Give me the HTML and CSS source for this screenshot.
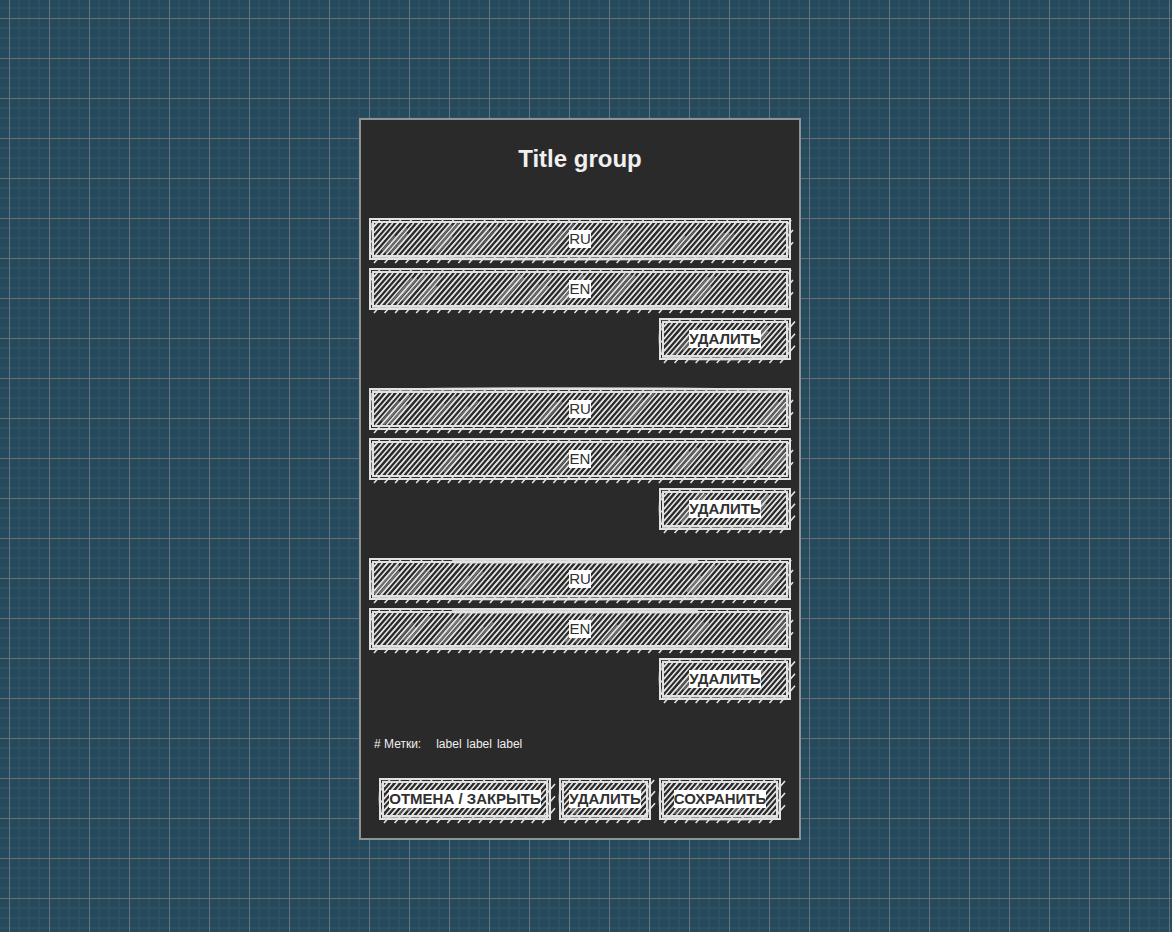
FILE: index.html
```html
<!DOCTYPE html>
<html lang="ru">
<head>
<meta charset="utf-8">
<title>Title group</title>
<link rel="stylesheet" href="styles.css">
</head>
<body>
<main class="canvas">
  <form class="panel">
    <h1 class="title">Title group</h1>
    <div class="groups">
      <section class="group">
        <label class="sketch field" data-seed="11" data-top="0" data-bottom="2" data-smudges="14,62,98,176,232,300,340"><input class="mark" aria-label="RU" value="RU"></label>
        <label class="sketch field" data-seed="23" data-top="0" data-bottom="-3" data-smudges="20,50,128,152,186,232,316"><input class="mark" aria-label="EN" value="EN"></label>
        <button type="button" class="sketch button remove" data-seed="31" data-top="-1" data-bottom="2"><span class="mark">УДАЛИТЬ</span></button>
      </section>
      <section class="group">
        <label class="sketch field" data-seed="42" data-top="-2" data-bottom="0" data-smudges="14,58,86,172,250,394"><input class="mark" aria-label="RU" value="RU"></label>
        <label class="sketch field" data-seed="57" data-top="0" data-bottom="0" data-smudges="68,184,234,304,370,392"><input class="mark" aria-label="EN" value="EN"></label>
        <button type="button" class="sketch button remove" data-seed="63" data-top="-1" data-bottom="1"><span class="mark">УДАЛИТЬ</span></button>
      </section>
      <section class="group">
        <label class="sketch field" data-seed="71" data-top="4" data-bottom="2" data-smudges="8,34,84,150,320,388"><input class="mark" aria-label="RU" value="RU"></label>
        <label class="sketch field" data-seed="85" data-top="4" data-bottom="-2" data-smudges="26,66,100,196,236,314,394"><input class="mark" aria-label="EN" value="EN"></label>
        <button type="button" class="sketch button remove" data-seed="97" data-top="-1" data-bottom="1"><span class="mark">УДАЛИТЬ</span></button>
      </section>
    </div>
    <div class="tags"><span># Метки:</span><span class="tag-list"><span>label</span><span>label</span><span>label</span></span></div>
    <div class="actions">
      <button type="button" class="sketch button cancel" data-seed="103" data-top="-1" data-bottom="1"><span class="mark">ОТМЕНА / ЗАКРЫТЬ</span></button>
      <button type="button" class="sketch button delete" data-seed="117" data-top="-1" data-bottom="1"><span class="mark">УДАЛИТЬ</span></button>
      <button type="submit" class="sketch button save" data-seed="129" data-top="-1" data-bottom="2"><span class="mark">СОХРАНИТЬ</span></button>
    </div>
  </form>
</main>
<script src="sketch.js"></script>
</body>
</html>
```
FILE: styles.css
```css
* { box-sizing: border-box; }
body {
  --minor: #304f5f;
  margin: 0;
  min-height: 100vh;
  background-color: #254a5d;
  background-image:
    linear-gradient(#6d6e6b 1px, transparent 1px),
    linear-gradient(90deg, #667279 1px, transparent 1px),
    linear-gradient(transparent 9px, var(--minor) 9px 11px, transparent 11px 19px, var(--minor) 19px 21px, transparent 21px 29px, var(--minor) 29px 31px, transparent 31px),
    linear-gradient(90deg, transparent 9px, var(--minor) 9px 11px, transparent 11px 19px, var(--minor) 19px 21px, transparent 21px 29px, var(--minor) 29px 31px, transparent 31px);
  background-size: 40px 40px;
  background-position: 0 18px, 9px 0, 0 18px, 9px 0;
  font-family: "Liberation Sans", Arial, sans-serif;
}
.canvas {
  display: flex;
  justify-content: center;
  padding: 118px 12px 92px 0;
}
.panel {
  width: 100%;
  max-width: 442px;
  padding: 25px 8px 18px;
  border: 2px solid #8c9396;
  background: #2a2a2a;
  color: #f0f0f0;
}
.title {
  margin: 0 0 45px;
  font-size: 24px;
  line-height: 28px;
  text-align: center;
}
.groups { display: grid; gap: 28px; }
.group { display: grid; gap: 8px; }
.sketch {
  position: relative;
  display: flex;
  align-items: center;
  justify-content: center;
  height: 42px;
  padding: 0;
  border: 0;
  background: none;
  font-family: inherit;
  font-size: 15px;
  line-height: 18px;
}
.sketch-art {
  position: absolute;
  inset: 0;
  width: 100%;
  height: 100%;
  overflow: visible;
  fill: none;
  stroke: #e2e2e2;
  pointer-events: none;
}
.mark {
  position: relative;
  background: #fff;
  color: #303030;
  white-space: nowrap;
}
input.mark {
  width: 22px;
  height: 18px;
  padding: 0;
  border: 0;
  outline: 0;
  font: inherit;
  line-height: 18px;
  text-align: center;
}
.button { font-weight: 700; cursor: pointer; }
.remove { width: 132px; justify-self: end; }
.tags {
  display: flex;
  gap: 15px;
  margin: 36px 5px 26px;
  font-size: 12px;
  line-height: 16px;
}
.tag-list { display: flex; gap: 5px; }
.actions { display: flex; gap: 8px; margin: 0 10px; }
.cancel { flex: 172 1 0; }
.delete { flex: 92 1 0; }
.save { flex: 122 1 0; }
```
FILE: sketch.js
```js
const SVG = "http://www.w3.org/2000/svg";
const SLOPE = 1.15;
const STEP = 10.55;

// Small repeatable generator so each box keeps its own strokes.
function generator(seed) {
  let s = seed * 7919;
  return () => {
    s = (s * 16807) % 2147483647;
    return s / 2147483647;
  };
}

// Diagonal line through (x, bottom), clipped to the given box.
function hatch(x, box) {
  let x1 = x, y1 = box.b;
  let x2 = x + (box.b - box.t) / SLOPE, y2 = box.t;
  if (x1 < box.l) { y1 -= (box.l - x1) * SLOPE; x1 = box.l; }
  if (x2 > box.r) { y2 += (x2 - box.r) * SLOPE; x2 = box.r; }
  return x1 < x2 ? `M${x1.toFixed(2)} ${y1.toFixed(2)}L${x2.toFixed(2)} ${y2.toFixed(2)}` : "";
}

function draw(el) {
  const old = el.querySelector(".sketch-art");
  if (old) old.remove();
  const w = el.clientWidth, h = el.clientHeight;
  const rand = generator(Number(el.dataset.seed));
  const isField = el.classList.contains("field");
  const top = Number(el.dataset.top), bottom = Number(el.dataset.bottom);
  const svg = document.createElementNS(SVG, "svg");
  svg.setAttribute("class", "sketch-art");
  svg.setAttribute("aria-hidden", "true");
  const add = (d, width, opacity) => {
    const p = document.createElementNS(SVG, "path");
    p.setAttribute("d", d);
    p.setAttribute("stroke-width", width);
    p.setAttribute("stroke-opacity", opacity);
    svg.append(p);
  };
  const inner = { l: 5, t: 5, r: w - 5, b: h - 5 };
  const outer = { l: 2, t: 2, r: w + (isField ? 2 : 4), b: h + 3 };
  const first = 5 - STEP * 4;
  const innerShift = (outer.b - inner.b) / SLOPE;

  let d = "";
  for (let x = first + innerShift; x < w; x += STEP / 2) d += hatch(x + (rand() - 0.5) * 0.5, inner);
  add(d, 1.6, 1);

  d = "";
  for (let x = first; x < w - 6; x += STEP) d += hatch(x, outer);
  add(d, 1.6, 1);

  const smudges = el.dataset.smudges
    ? el.dataset.smudges.split(",").map(Number)
    : [w * 0.12, w * 0.62];
  smudges.forEach((x) => {
    const count = 2 + Math.floor(rand() * 2);
    const start = Math.round((x - 12) / (STEP / 2)) * (STEP / 2) + first % (STEP / 2) + innerShift + 2.6;
    for (let i = 0; i < count; i++) {
      const cut = rand() * 14;
      const low = rand() * 6;
      add(hatch(start + i * STEP / 2 + low / SLOPE, {
        l: inner.l, r: inner.r, t: inner.t + cut, b: inner.b - low
      }), 1.6, 0.25 + rand() * 0.2);
    }
  });

  add(`M1 1H${w - 1}V${h - 1}H1Z`, 2, 1);
  add(`M4 4H${w - 4}V${h - 4}H4Z`, 2, 1);

  const curve = (y, bow) => `M3 ${y}Q${w / 2} ${y + bow * 2} ${w - 3} ${y}`;
  if (top > 0) add(`M${w * 0.2} 3H${w * 0.78}`, 5, 0.9);
  if (top < 0) add(curve(1.5, top * 0.8), 1.5, 0.85);
  if (isField && top < 0) add(curve(2.5, -1), 1, 0.6);
  if (bottom) add(curve(h - 2, bottom * 0.5), Math.abs(bottom) > 1 ? 3 : 2, 0.85);
  add(`M2.5 5Q${isField ? 0 : -1.5} ${h / 2} 2.5 ${h - 5}`, 2, 0.7);
  add(`M${w - 2} 5Q${w - 1} ${h / 2} ${w - 2} ${h - 5}`, 2, 0.5);
  el.prepend(svg);
}

const drawAll = () => document.querySelectorAll(".sketch").forEach(draw);
drawAll();
window.addEventListener("resize", drawAll);
```
